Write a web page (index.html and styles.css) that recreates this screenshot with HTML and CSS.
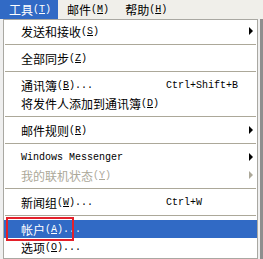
FILE: index.html
```html
<!DOCTYPE html>
<html>
<head>
<meta charset="utf-8">
<link rel="stylesheet" href="styles.css">
</head>
<body>
<div class="menubar">
  <span class="mb active"><span class="zh">工具</span>(<u>T</u>)</span>
  <span class="mb"><span class="zh">邮件</span>(<u>M</u>)</span>
  <span class="mb"><span class="zh">帮助</span>(<u>H</u>)</span>
</div>
<div class="area">
  <div class="menu">
    <div class="item"><span class="label"><span class="zh">发送和接收</span>(<u>S</u>)</span><span class="key"></span><span class="arrow"></span></div>
    <div class="sep"></div>
    <div class="item"><span class="label"><span class="zh">全部同步</span>(<u>Z</u>)</span><span class="key"></span><span></span></div>
    <div class="sep"></div>
    <div class="item"><span class="label"><span class="zh">通讯簿</span>(<u>B</u>)...</span><span class="key">Ctrl+Shift+B</span><span></span></div>
    <div class="item"><span class="label wide"><span class="zh">将发件人添加到通讯簿</span>(<u>D</u>)</span></div>
    <div class="sep"></div>
    <div class="item"><span class="label"><span class="zh">邮件规则</span>(<u>R</u>)</span><span class="key"></span><span class="arrow"></span></div>
    <div class="sep"></div>
    <div class="item"><span class="label">Windows Messenger</span><span class="key"></span><span class="arrow"></span></div>
    <div class="item disabled"><span class="label"><span class="zh">我的联机状态</span>(<u>Y</u>)</span><span class="key"></span><span class="arrow"></span></div>
    <div class="sep"></div>
    <div class="item"><span class="label"><span class="zh">新闻组</span>(<u>W</u>)...</span><span class="key">Ctrl+W</span><span></span></div>
    <div class="sep"></div>
    <div class="item selected"><span class="label"><span class="zh">帐户</span>(<u>A</u>)...</span><span class="key"></span><span></span><span class="mark"></span></div>
    <div class="item"><span class="label"><span class="zh">选项</span>(<u>O</u>)...</span><span class="key"></span><span></span></div>
  </div>
  <div class="side"></div>
</div>
</body>
</html>
```

FILE: styles.css
```css
html, body {
  margin: 0;
  padding: 0;
}
body {
  width: 263px;
  height: 259px;
  overflow: hidden;
  background: #efefef;
  font-family: "Liberation Mono", "Noto Sans CJK SC", monospace;
  font-size: 10px;
  color: #000;
}
.zh {
  font-family: "Noto Sans CJK SC", sans-serif;
  font-size: 12px;
}
u {
  text-decoration: underline;
  text-underline-offset: 1px;
}
.menubar {
  display: flex;
  height: 19px;
  background: #f0efea;
}
.mb {
  display: flex;
  align-items: center;
  height: 19px;
  padding: 0 7px 0 9px;
  white-space: nowrap;
}
.mb.active {
  background: #316ac5;
  color: #fff;
}
.area {
  display: flex;
  height: 240px;
}
.menu {
  margin-left: 3px;
  width: 254px;
  border: 1px solid #a9a8a2;
  background: #fff;
  padding: 2px 0;
}
.side {
  margin-left: 2px;
  width: 3px;
  background: #8e8e8e;
}
.item {
  position: relative;
  display: grid;
  grid-template-columns: 145px 1fr 12px;
  align-items: center;
  height: 18px;
  padding-left: 17px;
  white-space: nowrap;
}
.label {
  display: flex;
  align-items: center;
}
.label.wide {
  grid-column: 1 / 4;
}
.key {
  display: flex;
  align-items: center;
}
.arrow {
  width: 0;
  height: 0;
  margin-left: 4px;
  border-left: 4px solid #000;
  border-top: 4px solid transparent;
  border-bottom: 4px solid transparent;
}
.disabled {
  color: #aca899;
}
.disabled .arrow {
  border-left-color: #aca899;
}
.selected {
  background: #316ac5;
  color: #fff;
}
.mark {
  position: absolute;
  left: 2px;
  top: -3px;
  width: 64px;
  height: 20px;
  border: 2px solid #e3202a;
}
.sep {
  height: 9px;
  position: relative;
}
.sep::after {
  content: "";
  position: absolute;
  left: 1px;
  right: 1px;
  top: 4px;
  height: 1px;
  background: #aca899;
}
```
